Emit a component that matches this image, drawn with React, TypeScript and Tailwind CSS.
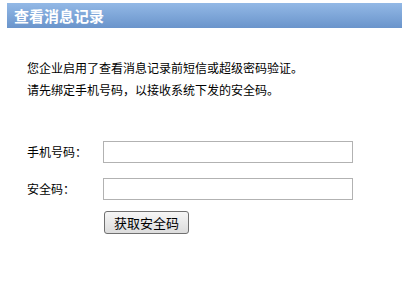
export default function App() {
  return (
    <div
      className="w-[402px] h-[281px] bg-white pt-[3px] pl-[7px]"
      style={{ fontFamily: '"Noto Sans CJK SC", sans-serif' }}
    >
      <div className="h-[25px] bg-gradient-to-b from-[#93b9e6] to-[#6a94cb] pl-[7px] text-white font-bold text-[15px] leading-[25px]">
        查看消息记录
      </div>

      <div className="pl-[20px] pt-[29px] text-[12px] text-black">
        <p className="leading-[22px]">您企业启用了查看消息记录前短信或超级密码验证。</p>
        <p className="leading-[22px]">请先绑定手机号码，以接收系统下发的安全码。</p>

        <div className="mt-[40px] flex items-center">
          <span className="w-[76px] leading-[22px]">手机号码：</span>
          <input className="w-[250px] h-[22px] border border-[#b2b2b2] outline-none" />
        </div>
        <div className="mt-[15px] flex items-center">
          <span className="w-[76px] leading-[22px]">安全码：</span>
          <input className="w-[250px] h-[22px] border border-[#b2b2b2] outline-none" />
        </div>
        <div className="mt-[11px] pl-[77px]">
          <button className="w-[85px] h-[23px] rounded-[3px] border border-[#707070] bg-gradient-to-b from-[#f6f6f6] to-[#dcdcdc] text-[13px] leading-[21px] text-black">
            获取安全码
          </button>
        </div>
      </div>
    </div>
  );
}
